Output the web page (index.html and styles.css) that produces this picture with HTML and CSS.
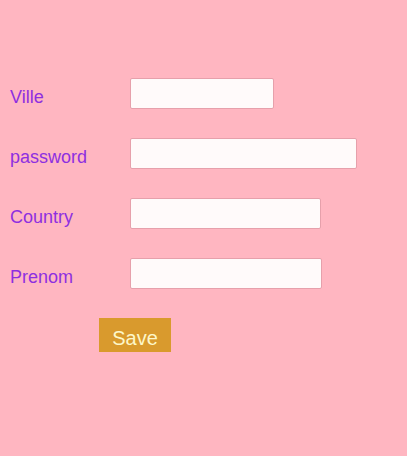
FILE: index.html
```html
<!DOCTYPE html>
<html lang="fr">
<head>
<meta charset="utf-8">
<title>Form</title>
<link rel="stylesheet" href="styles.css">
</head>
<body>
<form class="form">
  <div class="row">
    <label class="label" for="ville">Ville</label>
    <input class="field w-ville" id="ville" type="text">
  </div>
  <div class="row">
    <label class="label" for="password">password</label>
    <input class="field w-password" id="password" type="password">
  </div>
  <div class="row">
    <label class="label" for="country">Country</label>
    <input class="field w-country" id="country" type="text">
  </div>
  <div class="row">
    <label class="label" for="prenom">Prenom</label>
    <input class="field w-prenom" id="prenom" type="text">
  </div>
  <div class="actions">
    <button class="save" type="button">Save</button>
  </div>
</form>
</body>
</html>
```

FILE: styles.css
```css
html, body {
  margin: 0;
  padding: 0;
  background: #ffb6c1;
  height: 100%;
}
body {
  font-family: "Liberation Sans", Arial, sans-serif;
}
.form {
  padding: 78px 0 0 10px;
  display: flex;
  flex-direction: column;
  gap: 29px;
}
.row {
  display: flex;
  align-items: flex-start;
  height: 31px;
}
.label {
  width: 120px;
  font-size: 18px;
  line-height: 21px;
  margin-top: 9px;
  color: #8e2fe0;
}
.field {
  box-sizing: border-box;
  height: 31px;
  margin: 0;
  padding: 0 4px;
  background: #fffafa;
  border: 1px solid #e6a0ab;
  border-radius: 2px;
  outline: none;
}
.w-ville { width: 144px; }
.w-password { width: 227px; }
.w-country { width: 191px; }
.w-prenom { width: 192px; }
.actions {
  padding-left: 89px;
}
.save {
  box-sizing: border-box;
  width: 72px;
  height: 34px;
  margin: 0;
  padding: 6px 0 0;
  border: none;
  border-radius: 0;
  background: #d99a2d;
  color: #fdf7c9;
  font-family: "Liberation Sans", Arial, sans-serif;
  font-size: 20px;
}
```
